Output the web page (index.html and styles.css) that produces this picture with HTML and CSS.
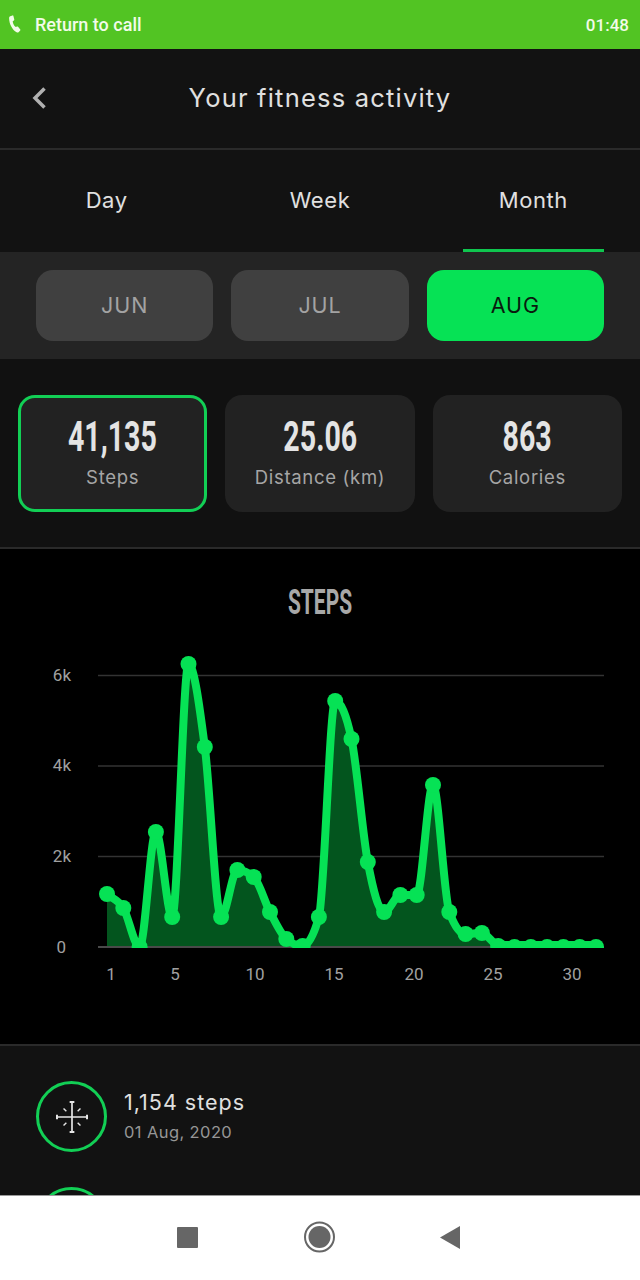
FILE: index.html
```html
<!DOCTYPE html>
<html lang="en">
<head>
<meta charset="utf-8">
<title>Your fitness activity</title>
<link rel="stylesheet" href="styles.css">
</head>
<body>
<div class="screen">
  <div class="callbar">
    <div class="call-left">
      <svg class="phone" viewBox="0 0 12 18"><path d="M1.2 1.2 L3.6 .4 C4 .3 4.3 .5 4.4 .9 L5.3 4.6 C5.4 5 5.2 5.3 4.9 5.5 L3.7 6.2 C3.9 8.4 5 10.6 6.8 12.1 L8 11.5 C8.4 11.3 8.8 11.4 9 11.7 L11.3 14.6 C11.5 14.9 11.5 15.3 11.2 15.6 L9.8 17 C9.2 17.6 8.4 17.8 7.6 17.3 C3.3 14.6 .3 9.4 .1 3.2 C.1 2.3 .5 1.5 1.2 1.2 Z"/></svg>
      <span class="call-text">Return to call</span>
    </div>
    <span>01:48</span>
  </div>

  <header class="header">
    <svg class="back" viewBox="0 0 16 24"><path d="M13.5 2.5 L4 12 L13.5 21.5"/></svg>
    <h1 class="title">Your fitness activity</h1>
  </header>

  <nav class="tabs">
    <div class="tab">Day</div>
    <div class="tab">Week</div>
    <div class="tab tab-active">Month</div>
  </nav>

  <div class="months">
    <div class="month">JUN</div>
    <div class="month">JUL</div>
    <div class="month month-active">AUG</div>
  </div>

  <section class="stats">
    <div class="card card-active"><div class="num">41,135</div><div class="label">Steps</div></div>
    <div class="card"><div class="num">25.06</div><div class="label">Distance (km)</div></div>
    <div class="card"><div class="num">863</div><div class="label">Calories</div></div>
  </section>

  <section class="chart">
    <h2 class="chart-title">STEPS</h2>
    <svg class="plot" viewBox="0 640 640 360">
      <defs><clipPath id="plotclip"><rect x="90" y="640" width="520" height="308"/></clipPath></defs>
      <g class="grid">
        <line x1="98" x2="604" y1="675.5" y2="675.5"/>
        <line x1="98" x2="604" y1="766" y2="766"/>
        <line x1="98" x2="604" y1="856.5" y2="856.5"/>
      </g>
      <g class="ylabels">
        <text x="71" y="681">6k</text>
        <text x="71" y="771">4k</text>
        <text x="71" y="862">2k</text>
        <text x="66" y="953">0</text>
      </g>
      <g class="xlabels">
        <text x="111" y="980">1</text>
        <text x="175" y="980">5</text>
        <text x="255" y="980">10</text>
        <text x="334" y="980">15</text>
        <text x="414" y="980">20</text>
        <text x="493" y="980">25</text>
        <text x="572" y="980">30</text>
      </g>
      <g clip-path="url(#plotclip)">
        <path class="area" d="M107 894 C112.4 899 117.9 899.2 123.3 908 C128.7 916.8 134.2 947 139.6 947 C145 947 150.5 832 155.9 832 C161.3 832 166.8 917 172.2 917 C177.6 917 183.1 664 188.5 664 C193.9 664 199.4 705 204.8 747 C210.2 789 215.7 917 221.1 917 C226.5 917 232 870 237.4 870 C242.8 870 248.3 872.3 253.7 877 C259.1 881.7 264.6 901.7 270 912 C275.4 922.3 280.9 934.3 286.3 939 C291.7 943.7 297.2 946 302.6 946 C308 946 313.5 936.3 318.9 917 C324.3 897.7 329.8 701 335.2 701 C340.6 701 346.1 713.7 351.5 739 C356.9 764.3 362.4 833.2 367.8 862 C373.2 890.8 378.7 912 384.1 912 C389.5 912 395 895 400.4 895 C405.8 895 411.3 895 416.7 895 C422.1 895 427.6 785 433 785 C438.4 785 443.9 897.3 449.3 912 C454.7 926.7 460.2 934 465.6 934 C471 934 476.5 933 481.9 933 C487.3 933 492.8 945 498.2 945 L596 945 L596 947 L107 947 Z"/>
        <line class="axis" x1="98" x2="604" y1="947" y2="947"/>
        <path class="line" d="M107 894 C112.4 899 117.9 899.2 123.3 908 C128.7 916.8 134.2 947 139.6 947 C145 947 150.5 832 155.9 832 C161.3 832 166.8 917 172.2 917 C177.6 917 183.1 664 188.5 664 C193.9 664 199.4 705 204.8 747 C210.2 789 215.7 917 221.1 917 C226.5 917 232 870 237.4 870 C242.8 870 248.3 872.3 253.7 877 C259.1 881.7 264.6 901.7 270 912 C275.4 922.3 280.9 934.3 286.3 939 C291.7 943.7 297.2 946 302.6 946 C308 946 313.5 936.3 318.9 917 C324.3 897.7 329.8 701 335.2 701 C340.6 701 346.1 713.7 351.5 739 C356.9 764.3 362.4 833.2 367.8 862 C373.2 890.8 378.7 912 384.1 912 C389.5 912 395 895 400.4 895 C405.8 895 411.3 895 416.7 895 C422.1 895 427.6 785 433 785 C438.4 785 443.9 897.3 449.3 912 C454.7 926.7 460.2 934 465.6 934 C471 934 476.5 933 481.9 933 C487.3 933 492.8 945 498.2 945 L596 945"/>
        <g class="dots">
          <circle cx="107" cy="894" r="8"/><circle cx="123.3" cy="908" r="8"/><circle cx="139.6" cy="947" r="8"/><circle cx="155.9" cy="832" r="8"/><circle cx="172.2" cy="917" r="8"/><circle cx="188.5" cy="664" r="8"/><circle cx="204.8" cy="747" r="8"/><circle cx="221.1" cy="917" r="8"/><circle cx="237.4" cy="870" r="8"/><circle cx="253.7" cy="877" r="8"/><circle cx="270" cy="912" r="8"/><circle cx="286.3" cy="939" r="8"/><circle cx="302.6" cy="946" r="8"/><circle cx="318.9" cy="917" r="8"/><circle cx="335.2" cy="701" r="8"/><circle cx="351.5" cy="739" r="8"/><circle cx="367.8" cy="862" r="8"/><circle cx="384.1" cy="912" r="8"/><circle cx="400.4" cy="895" r="8"/><circle cx="416.7" cy="895" r="8"/><circle cx="433" cy="785" r="8"/><circle cx="449.3" cy="912" r="8"/><circle cx="465.6" cy="934" r="8"/><circle cx="481.9" cy="933" r="8"/><circle cx="498.2" cy="946" r="8"/><circle cx="514.5" cy="947" r="8"/><circle cx="530.8" cy="947" r="8"/><circle cx="547.1" cy="947" r="8"/><circle cx="563.4" cy="947" r="8"/><circle cx="579.7" cy="947" r="8"/><circle cx="596" cy="947" r="8"/>
        </g>
      </g>
    </svg>
  </section>

  <section class="list">
    <div class="item">
      <div class="ring">
        <svg class="ring-icon" viewBox="0 0 34 34">
          <path class="cross" d="M17 1 V33 M1 17 H33"/>
          <path class="serif" d="M14.5 1 H19.5 M14.5 33 H19.5 M1 14.5 V19.5 M33 14.5 V19.5"/>
          <path class="ticks" d="M8 8 L11 11 M26 8 L23 11 M8 26 L11 23 M26 26 L23 23"/>
        </svg>
      </div>
      <div class="item-text">
        <div class="item-main">1,154 steps</div>
        <div class="item-sub">01 Aug, 2020</div>
      </div>
    </div>
    <div class="item">
      <div class="ring"></div>
    </div>
  </section>

  <footer class="navbar">
    <svg class="nav-svg" viewBox="0 0 320 40">
      <rect x="17" y="7" width="21" height="21" rx="1"/>
      <circle class="nav-ring" cx="159.5" cy="17" r="14.5"/>
      <circle cx="159.5" cy="17" r="11"/>
      <path d="M300 6 V29 L280 17.5 Z"/>
    </svg>
  </footer>
</div>
</body>
</html>
```

FILE: styles.css
```css
* { box-sizing: border-box; margin: 0; padding: 0; }
html, body { background: #121212; }
body { font-family: "Inter", "Noto Sans", sans-serif; }

.screen {
  width: 640px;
  height: 1280px;
  display: flex;
  flex-direction: column;
  overflow: hidden;
  background: #121212;
}

.callbar {
  height: 49px;
  flex: none;
  background: #52c423;
  color: #f2fbe9;
  font: 500 17px "Roboto", sans-serif;
  display: flex;
  align-items: center;
  justify-content: space-between;
  padding: 0 11px 0 9px;
}
.call-left { display: flex; align-items: center; gap: 14px; }
.call-text { font-size: 18px; }
.phone { width: 12px; height: 18px; fill: #f2fbe9; margin-top: -2px; }

.header {
  height: 101px;
  flex: none;
  display: flex;
  align-items: center;
  justify-content: center;
  position: relative;
  border-bottom: 2px solid #2a2a2a;
}
.back {
  position: absolute;
  left: 31px;
  top: 37px;
  width: 16px;
  height: 24px;
  fill: none;
  stroke: #b0b0b0;
  stroke-width: 3.5;
}
.title {
  font-size: 25.5px;
  font-weight: 400;
  color: #e0e0e0;
  letter-spacing: 1.2px;
  margin-top: -2px;
}

.tabs {
  height: 102px;
  flex: none;
  display: grid;
  grid-template-columns: repeat(3, 1fr);
}
.tab {
  display: flex;
  align-items: center;
  justify-content: center;
  font-size: 22px;
  color: #e0e0e0;
  letter-spacing: 0.6px;
  position: relative;
  padding-bottom: 2px;
}
.tab-active::after {
  content: "";
  position: absolute;
  left: 36px;
  right: 36px;
  bottom: 0;
  height: 3px;
  background: #0fc64f;
}

.months {
  height: 107px;
  flex: none;
  background: #242424;
  display: flex;
  align-items: center;
  gap: 18px;
  padding: 0 36px;
}
.month {
  flex: 1;
  height: 71px;
  border-radius: 17px;
  background: #404040;
  color: #a3a3a3;
  font-size: 21.5px;
  display: flex;
  align-items: center;
  justify-content: center;
  letter-spacing: 0.9px;
  padding-bottom: 1px;
}
.month-active { background: #06e255; color: #0a1a0e; }

.stats {
  height: 190px;
  flex: none;
  background: #111;
  border-bottom: 2px solid #2a2a2a;
  display: grid;
  grid-template-columns: repeat(3, 1fr);
  gap: 18px;
  padding: 36px 18px 0;
  align-items: start;
}
.card {
  height: 117px;
  background: #222;
  border-radius: 17px;
  display: flex;
  flex-direction: column;
  align-items: center;
  padding-top: 21px;
}
.card-active { border: 3px solid #12cf55; padding-top: 18px; }
.num {
  font: 700 42px/42px "Roboto", sans-serif;
  color: #e4e4e4;
  transform: scaleX(0.68);
}
.label {
  font-size: 18.5px;
  color: #a6a6a6;
  margin-top: 8px;
  letter-spacing: 0.7px;
  line-height: 22px;
}

.chart {
  height: 497px;
  flex: none;
  background: #000;
  border-bottom: 2px solid #2a2a2a;
  display: flex;
  flex-direction: column;
}
.chart-title {
  height: 91px;
  flex: none;
  padding-top: 34px;
  text-align: center;
  font: 700 35px/40px "Roboto", sans-serif;
  color: #a8a8a8;
  transform: scaleX(0.6);
}
.plot { display: block; width: 640px; height: 360px; flex: none; }
.grid line { stroke: #333; stroke-width: 1.5; }
.axis { stroke: #4a4a4a; stroke-width: 2; }
.ylabels text { font: 17px "Roboto", sans-serif; fill: #a0a0a0; text-anchor: end; }
.xlabels text { font: 17px "Roboto", sans-serif; fill: #a0a0a0; text-anchor: middle; }
.area { fill: #03551e; }
.line { fill: none; stroke: #06e255; stroke-width: 8; stroke-linejoin: round; }
.dots circle { fill: #06e255; }

.list {
  flex: 1;
  min-height: 0;
  overflow: hidden;
  padding: 35px 36px 0;
  background: #121212;
}
.item { display: flex; align-items: center; gap: 17px; height: 71px; margin-bottom: 35px; }
.ring {
  width: 71px;
  height: 71px;
  flex: none;
  border: 3.5px solid #12cf55;
  border-radius: 50%;
  display: flex;
  align-items: center;
  justify-content: center;
}
.ring-icon { width: 32px; height: 32px; fill: none; stroke: #e6e6e6; }
.cross { stroke-width: 1.8; }
.serif { stroke-width: 2.2; }
.ticks { stroke-width: 1.5; }
.item-main { font-size: 21.5px; color: #e0e0e0; letter-spacing: 1px; line-height: 28px; margin-top: -2px; }
.item-sub { font-size: 16.5px; color: #969696; letter-spacing: 0.4px; line-height: 22px; margin-top: 5px; }

.navbar {
  height: 85px;
  flex: none;
  background: #fff;
  border-top: 1px solid #999;
  display: flex;
  align-items: flex-start;
  justify-content: center;
  padding-top: 24px;
}
.nav-svg { width: 320px; height: 40px; fill: #666; }
.nav-ring { fill: none; stroke: #666; stroke-width: 2; }
```
